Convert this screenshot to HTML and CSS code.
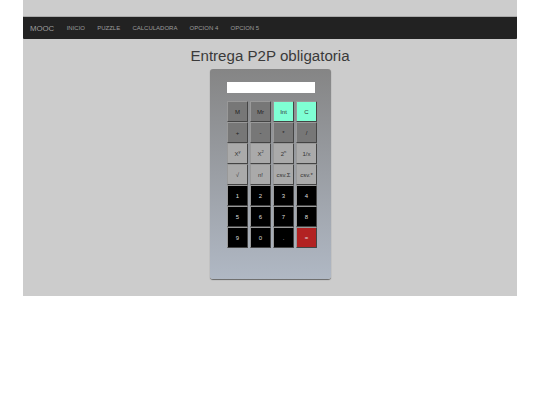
FILE: index.html
```html
<!DOCTYPE html>
<html>
<head>
    <meta charset="UTF-8">
    <title>Entrega P2P obligatoria</title>
    <link rel="stylesheet" href="styles.css">
</head>
<body>

    <div class="container">
        <nav class="navbar">
            <span class="brand">MOOC</span>
            <a>INICIO</a>
            <a>PUZZLE</a>
            <a>CALCULADORA</a>
            <a>OPCION 4</a>
            <a>OPCION 5</a>
        </nav>

        <h1>Entrega P2P obligatoria</h1>

        <div class="calc">
            <div class="display"></div>
            <div class="keys">
                <button class="key dark">M</button>
                <button class="key dark">Mr</button>
                <button class="key mint">Int</button>
                <button class="key mint">C</button>

                <button class="key dark">+</button>
                <button class="key dark">-</button>
                <button class="key dark">*</button>
                <button class="key dark">/</button>

                <button class="key light">X<sup>y</sup></button>
                <button class="key light">X<sup>2</sup></button>
                <button class="key light">2<sup>n</sup></button>
                <button class="key light">1/x</button>

                <button class="key light">√</button>
                <button class="key light">n!</button>
                <button class="key light">csv.Σ</button>
                <button class="key light">csv.*</button>

                <button class="key num">1</button>
                <button class="key num">2</button>
                <button class="key num">3</button>
                <button class="key num">4</button>

                <button class="key num">5</button>
                <button class="key num">6</button>
                <button class="key num">7</button>
                <button class="key num">8</button>

                <button class="key num">9</button>
                <button class="key num">0</button>
                <button class="key num">.</button>
                <button class="key equals">=</button>
            </div>
        </div>
    </div>

</body>
</html>
```

FILE: styles.css
```css
body {
    margin: 0;
    background-color: #fff;
    font-family: "Liberation Sans", Arial, sans-serif;
}
.container {
    width: 494px;
    height: 296px;
    margin-left: 23px;
    padding-top: 16px;
    box-sizing: border-box;
    background-color: #ccc;
}
.navbar {
    display: flex;
    align-items: center;
    height: 23px;
    padding-left: 7px;
    background-color: #222;
    border-top: 1px solid #aaa;
    box-sizing: border-box;
    border-radius: 1px;
    color: #9d9d9d;
}
.brand {
    font-size: 7.8px;
    margin-right: 12.4px;
}
.navbar a {
    font-size: 6px;
    margin-right: 12.2px;
}
h1 {
    margin: 8px 0 4px;
    height: 18px;
    line-height: 18px;
    font-size: 15.1px;
    font-weight: normal;
    text-align: center;
    color: #3a3a3a;
}
.calc {
    width: 121px;
    height: 210px;
    margin-left: 187px;
    padding: 13px 0 0 17px;
    box-sizing: border-box;
    background: linear-gradient(#858585, #b0b8c4);
    border-radius: 3px;
    box-shadow: 0 1px 1px #666;
}
.display {
    width: 88px;
    height: 11px;
    margin-bottom: 8px;
    background-color: #fff;
}
.keys {
    display: grid;
    grid-template-columns: repeat(4, 21px);
    grid-auto-rows: 21px;
    column-gap: 2px;
}
.key {
    padding: 0;
    font-family: "Liberation Sans", Arial, sans-serif;
    font-size: 6px;
    border: 1px solid #444;
    border-top-color: #999;
    border-left-color: #999;
    border-radius: 1px;
}
.key sup {
    font-size: 4px;
    line-height: 0;
}
.dark {
    background-color: #777;
    color: #222;
}
.mint {
    background-color: #7fffd4;
    color: #333;
}
.light {
    background-color: #aaa;
    color: #333;
}
.num {
    background-color: #000;
    color: #ddd;
}
.equals {
    background-color: #b22222;
    color: #ddd;
}
```
